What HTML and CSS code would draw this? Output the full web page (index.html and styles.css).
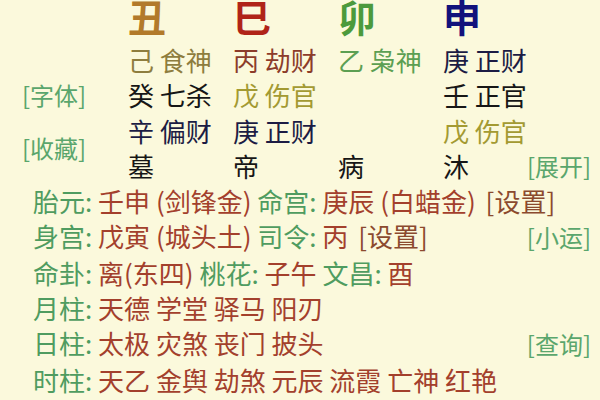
FILE: index.html
```html
<!DOCTYPE html>
<html lang="zh">
<head>
<meta charset="utf-8">
<link rel="stylesheet" href="styles.css">
</head>
<body>
<div class="page">
  <div class="chart">
    <div class="big c-chou col1">丑</div>
    <div class="big c-si col2">巳</div>
    <div class="big c-mao col3">卯</div>
    <div class="big c-shen col4">申</div>

    <div class="cell col1 t-olive">己 食神</div>
    <div class="cell col2 t-brown">丙 劫财</div>
    <div class="cell col3 t-green">乙 枭神</div>
    <div class="cell col4 t-navy">庚 正财</div>

    <div class="side link r3">[字体]</div>
    <div class="cell col1 t-black r3">癸 七杀</div>
    <div class="cell col2 t-yellow r3">戊 伤官</div>
    <div class="cell col4 t-black r3">壬 正官</div>

    <div class="side link r4">[收藏]</div>
    <div class="cell col1 t-navy r4">辛 偏财</div>
    <div class="cell col2 t-navy r4">庚 正财</div>
    <div class="cell col4 t-yellow r4">戊 伤官</div>

    <div class="cell col1 t-black r5">墓</div>
    <div class="cell col2 t-black r5">帝</div>
    <div class="cell col3 t-black r5">病</div>
    <div class="cell col4 t-black r5">沐</div>
    <div class="right link r5">[展开]</div>
  </div>

  <div class="info">
    <div class="row"><span><span class="k">胎元:</span> <span class="v">壬申 (剑锋金)</span> <span class="k">命宫:</span> <span class="v">庚辰 (白蜡金)</span> <span class="set">[设置]</span></span></div>
    <div class="row"><span><span class="k">身宫:</span> <span class="v">戊寅 (城头土)</span> <span class="k">司令:</span> <span class="v">丙</span> <span class="set">[设置]</span></span><span class="link">[小运]</span></div>
    <div class="row"><span><span class="k">命卦:</span> <span class="v">离(东四)</span> <span class="k">桃花:</span> <span class="v">子午</span> <span class="k">文昌:</span> <span class="v">酉</span></span></div>
    <div class="row"><span><span class="k">月柱:</span> <span class="v">天德 学堂 驿马 阳刃</span></span></div>
    <div class="row"><span><span class="k">日柱:</span> <span class="v">太极 灾煞 丧门 披头</span></span><span class="link">[查询]</span></div>
    <div class="row"><span><span class="k">时柱:</span> <span class="v">天乙 金舆 劫煞 元辰 流霞 亡神 红艳</span></span></div>
  </div>
</div>
</body>
</html>
```

FILE: styles.css
```css
html, body {
  margin: 0;
  padding: 0;
  background: #fbf9dc;
}

body {
  width: 600px;
  height: 400px;
  overflow: hidden;
  font-family: "Noto Sans CJK SC", "Noto Sans", sans-serif;
}

.page {
  margin-top: -3px;
}

.chart {
  display: grid;
  grid-template-columns: 106px 105px 105px 105px 84px 1fr;
  grid-template-rows: 45px repeat(4, 35.3px);
  padding-left: 22px;
  padding-right: 9px;
}

.big {
  grid-row: 1;
  align-self: start;
  font-size: 38px;
  font-weight: 700;
  line-height: 38px;
}

.cell {
  grid-row: 2;
  font-size: 26px;
  line-height: 35.3px;
  white-space: nowrap;
}

.col1 { grid-column: 2; }
.col2 { grid-column: 3; }
.col3 { grid-column: 4; }
.col4 { grid-column: 5; }

.r3 { grid-row: 3; }
.r4 { grid-row: 4; }
.r5 { grid-row: 5; }

.side {
  grid-column: 1;
  line-height: 35.3px;
  white-space: nowrap;
}

.side.r4 {
  grid-row: 4 / span 2;
  align-self: center;
}

.right {
  grid-column: 6;
  justify-self: end;
  line-height: 35.3px;
  white-space: nowrap;
}

.link {
  color: #5aa66c;
  font-size: 24px;
}

.c-chou { color: #b27a2a; }
.c-si { color: #b02418; }
.c-mao { color: #4c9a3c; }
.c-shen { color: #12127c; }

.t-olive { color: #8e7d3e; }
.t-brown { color: #8c3c2a; }
.t-green { color: #5c9f52; }
.t-navy { color: #1c1c44; }
.t-black { color: #161616; }
.t-yellow { color: #a39a32; }

.info {
  padding-left: 33px;
  padding-right: 9px;
}

.row {
  display: flex;
  justify-content: space-between;
  align-items: baseline;
  font-size: 26px;
  line-height: 35.3px;
  white-space: nowrap;
}

.k { color: #4f9c60; }
.v { color: #a3402c; }
.set {
  color: #8b4a2e;
  margin-left: 4px;
}
```
